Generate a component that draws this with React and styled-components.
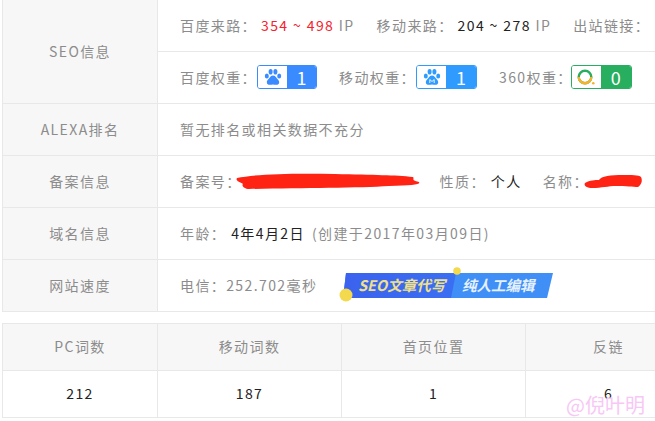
import styled, { createGlobalStyle } from "styled-components";

const GlobalStyle = createGlobalStyle`
  html, body {
    margin: 0;
    padding: 0;
    background: #fff;
    overflow: hidden;
  }
  body {
    width: 655px;
    height: 421px;
    font-family: "Noto Sans CJK SC", "Open Sans", sans-serif;
    font-size: 14px;
    letter-spacing: 1.4px;
    color: #8c8c8c;
  }
`;

const Page = styled.div`
  width: 655px;
  height: 421px;
  overflow: hidden;
  padding-left: 2px;
  box-sizing: border-box;
`;

const InfoTable = styled.div`
  width: 760px;
  border-left: 1px solid #e8e8e8;
  margin-bottom: 11px;
`;

const InfoRow = styled.div`
  display: flex;
  border-bottom: 1px solid #e8e8e8;
`;

const Label = styled.div`
  width: 155px;
  flex: none;
  display: flex;
  align-items: center;
  justify-content: center;
  padding-bottom: 2px;
  box-sizing: border-box;
  background: #f7f7f7;
  border-right: 1px solid #e8e8e8;
`;

const Cells = styled.div`
  flex: 1;
  display: flex;
  flex-direction: column;
`;

const Line = styled.div`
  box-sizing: border-box;
  padding: 0 0 2px 22px;
  display: flex;
  align-items: center;
  white-space: nowrap;
  border-top: ${(p) => (p.$split ? "1px solid #e8e8e8" : "none")};
  height: ${(p) => (p.$split ? "52px" : "51px")};
`;

const Item = styled.span`
  margin-left: ${(p) => p.$left || 0}px;
  margin-right: ${(p) => p.$gap || 0}px;
  display: inline-flex;
  align-items: center;
`;

const Value = styled.span`
  color: ${(p) => p.$color || "#222"};
  margin-left: ${(p) => p.$left ?? 0}px;
`;

const Badge = styled.span`
  display: inline-flex;
  width: ${(p) => p.$width || 60}px;
  height: 24px;
  box-sizing: border-box;
  margin-left: ${(p) => p.$left ?? 0}px;
  border: 1px solid ${(p) => p.$color};
  border-radius: 3px;
  overflow: hidden;
`;

const BadgeIcon = styled.span`
  width: 29px;
  display: flex;
  align-items: center;
  justify-content: center;
  background: #fff;
`;

const BadgeNum = styled.span`
  flex: 1;
  display: flex;
  align-items: center;
  justify-content: center;
  background: ${(p) => p.$color};
  color: #fff;
  font-size: 18px;
  letter-spacing: 0;
`;

const Scribble = styled.svg`
  display: block;
  flex: none;
  margin-left: ${(p) => p.$left || 0}px;
  margin-right: ${(p) => p.$right || 0}px;
`;

const Banner = styled.svg`
  display: block;
  flex: none;
  overflow: visible;
  margin: 0 0 2px 22px;
`;

const BannerText = styled.text`
  font-family: "Noto Sans CJK SC", sans-serif;
  font-size: 14.5px;
  font-weight: 700;
  font-style: italic;
  letter-spacing: 0;
  fill: ${(p) => p.$fill};
`;

const DataTable = styled.div`
  width: 760px;
  display: grid;
  grid-template-columns: 155px 184px 184px 166px 1fr;
  border-top: 1px solid #e8e8e8;
  border-left: 1px solid #e8e8e8;
`;

const HeadCell = styled.div`
  height: 47px;
  display: flex;
  align-items: center;
  justify-content: center;
  padding-bottom: 2px;
  box-sizing: border-box;
  background: #f7f7f7;
  border-right: 1px solid #e8e8e8;
  border-bottom: 1px solid #e8e8e8;
`;

const BodyCell = styled(HeadCell)`
  background: #fff;
  color: #222;
`;

const Watermark = styled.div`
  position: absolute;
  left: 566px;
  top: 391px;
  font-size: 20px;
  letter-spacing: 0;
  color: #f7c8f5;
  line-height: 28px;
`;

const Paw = ({ color, mobile }) => (
  <svg width="18" height="18" viewBox="0 0 18 18">
    <g fill={color}>
      <ellipse cx="2.8" cy="8" rx="2" ry="2.6" />
      <ellipse cx="6.6" cy="3.8" rx="2" ry="2.8" />
      <ellipse cx="11.4" cy="3.8" rx="2" ry="2.8" />
      <ellipse cx="15.2" cy="8" rx="2" ry="2.6" />
      <path d="M9 7.6c2 0 3 1.7 4 3 1 1.200 2.200 2 2.200 3.600 0 2-1.700 2.800-3.200 2.600-1.200-.1-2-.4-3-.4s-1.800.3-3 .4c-1.500.2-3.200-.6-3.200-2.600 0-1.600 1.200-2.400 2.200-3.600 1-1.300 2-3 4-3z" />
    </g>
    {mobile && <path d="M6.800 15v-3.500L9 13.500l2.200-2V15" fill="none" stroke="#fff" strokeWidth="0.9" />}
  </svg>
);

const Ring = () => (
  <svg width="20" height="18" viewBox="0 0 20 18">
    <circle cx="9" cy="9" r="6.300" fill="none" stroke="#27ae5f" strokeWidth="2.400" />
    <path d="M2.700 9a6.300 6.300 0 0 0 12.600 0" fill="none" stroke="#f5b32b" strokeWidth="2.400" />
    <circle cx="17.300" cy="15.200" r="1.300" fill="#f5b32b" />
  </svg>
);

const App = () => (
  <>
    <GlobalStyle />
    <Page>
      <InfoTable>
        <InfoRow>
          <Label>SEO信息</Label>
          <Cells>
            <Line>
              <Item $gap={22}>
                百度来路：
                <Value $color="#f5222d" $left={4}>354 ~ 498</Value>
                &nbsp;IP
              </Item>
              <Item $gap={22}>
                移动来路：
                <Value $left={4}>204 ~ 278</Value>
                &nbsp;IP
              </Item>
              <Item>出站链接：</Item>
            </Line>
            <Line $split>
              <Item $gap={22}>
                百度权重：
                <Badge $color="#3a8bff">
                  <BadgeIcon><Paw color="#3a8bff" /></BadgeIcon>
                  <BadgeNum $color="#3a8bff">1</BadgeNum>
                </Badge>
              </Item>
              <Item $gap={22}>
                移动权重：
                <Badge $color="#2f9bff" $width={61}>
                  <BadgeIcon><Paw color="#2f9bff" mobile /></BadgeIcon>
                  <BadgeNum $color="#2f9bff">1</BadgeNum>
                </Badge>
              </Item>
              <Item>
                360权重：
                <Badge $color="#27ae5f" $width={61} $left={-2}>
                  <BadgeIcon><Ring /></BadgeIcon>
                  <BadgeNum $color="#27ae5f">0</BadgeNum>
                </Badge>
              </Item>
            </Line>
          </Cells>
        </InfoRow>
        <InfoRow>
          <Label>ALEXA排名</Label>
          <Cells><Line>暂无排名或相关数据不充分</Line></Cells>
        </InfoRow>
        <InfoRow>
          <Label>备案信息</Label>
          <Cells>
            <Line>
              备案号：
              <Scribble width="186" height="18" viewBox="0 0 186 18" $left={-7} $right={19}>
                <path d="M2 6C20 2 60 1 100 2s60 1 78 3c2 2-3 3 6 5 2 3-8 3-30 4-30 2-90 2-140 3-4 0-8-3-6-5C5 10 0 9 2 6z" fill="#ff2314" />
              </Scribble>
              性质：
              <Value $left={5}>个人</Value>
              <Item $left={21} />
              名称：
              <Scribble width="60" height="16" viewBox="0 0 60 16" $left={-6}>
                <path d="M2 10c5-3 10-3 14-3 2-4 12-5 24-5 8 0 16 0 18 2 2 4 0 8-3 10-5 0-12-1-22-1-8 0-14 2-24 2-4 0-9-2-7-5z" fill="#ff2314" />
              </Scribble>
            </Line>
          </Cells>
        </InfoRow>
        <InfoRow>
          <Label>域名信息</Label>
          <Cells>
            <Line>
              年龄：
              <Value $left={5}>4年4月2日</Value>
              <Item $left={7}>(创建于2017年03月09日)</Item>
            </Line>
          </Cells>
        </InfoRow>
        <InfoRow>
          <Label>网站速度</Label>
          <Cells>
            <Line>
              电信：252.702毫秒
              <Banner width="216" height="40" viewBox="0 0 216 40">
                <defs>
                  <linearGradient id="bannerLeft" x1="0" x2="1">
                    <stop offset="0" stopColor="#3b62ee" />
                    <stop offset="1" stopColor="#3a6ff2" />
                  </linearGradient>
                </defs>
                <polygon points="7,9 214,9 208,34 4,34" fill="#3f8ff6" />
                <polygon points="7,9 117,9 112,34 4,34" fill="url(#bannerLeft)" />
                <circle cx="118" cy="7" r="3.800" fill="#f3d94e" />
                <circle cx="7" cy="31" r="6.500" fill="#f3d94e" />
                <BannerText x="19" y="27" $fill="#f0e08a">SEO文章代写</BannerText>
                <BannerText x="123" y="27" $fill="#e6f1ff">纯人工编辑</BannerText>
              </Banner>
            </Line>
          </Cells>
        </InfoRow>
      </InfoTable>
      <DataTable>
        <HeadCell>PC词数</HeadCell>
        <HeadCell>移动词数</HeadCell>
        <HeadCell>首页位置</HeadCell>
        <HeadCell>反链</HeadCell>
        <HeadCell />
        <BodyCell>212</BodyCell>
        <BodyCell>187</BodyCell>
        <BodyCell>1</BodyCell>
        <BodyCell>6</BodyCell>
        <BodyCell />
      </DataTable>
      <Watermark>@倪叶明</Watermark>
    </Page>
  </>
);

export default App;
